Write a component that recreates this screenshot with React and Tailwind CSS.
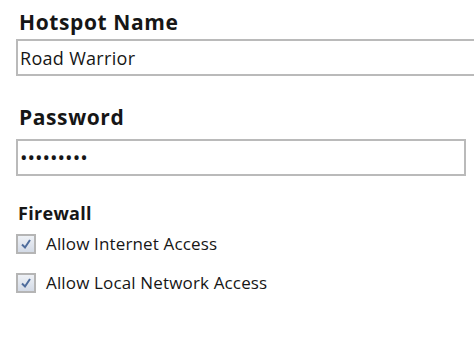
export default function App() {
  return (
    <div
      className="w-[474px] h-[355px] bg-white overflow-hidden pl-4 text-[#161616]"
      style={{ fontFamily: '"Open Sans", "Liberation Sans", sans-serif' }}
    >
      <div className="pt-[7px]">
        <h2 className="pl-[3px] text-[21px] font-bold leading-[30px] tracking-[0.6px]">Hotspot Name</h2>
        <input
          type="text"
          defaultValue="Road Warrior"
          className="mt-[2px] w-[480px] h-[37px] border-2 border-[#bababa] px-[2px] text-[18px] tracking-[0.3px] outline-none"
        />
      </div>
      <div className="mt-[26px]">
        <h2 className="pl-[3px] text-[21px] font-bold leading-[30px] tracking-[0.6px]">Password</h2>
        <input
          type="password"
          defaultValue="123456789"
          className="mt-[7px] w-[450px] h-[37px] border-2 border-[#bababa] px-[2px] text-[20px] outline-none"
        />
      </div>
      <div className="mt-[25px]">
        <h3 className="pl-[2px] text-[18px] font-bold leading-[24px] tracking-[0.3px]">Firewall</h3>
        <Check label="Allow Internet Access" className="mt-[9px]" />
        <Check label="Allow Local Network Access" className="mt-[19px]" />
      </div>
    </div>
  );
}

function Check({ label, className }) {
  return (
    <label className={`flex items-center gap-[10px] ${className}`}>
      <span className="w-5 h-5 shrink-0 border-2 border-[#b5b5b5] bg-gradient-to-b from-[#eef1f6] to-[#d3dae6] flex items-center justify-center">
        <svg width="12" height="12" viewBox="0 0 12 12">
          <path d="M2 6.5 L5 9.5 L10 2" fill="none" stroke="#4e6c9c" strokeWidth="2" />
        </svg>
      </span>
      <span className="text-[17px] leading-[20px] tracking-[0.15px]">{label}</span>
    </label>
  );
}
